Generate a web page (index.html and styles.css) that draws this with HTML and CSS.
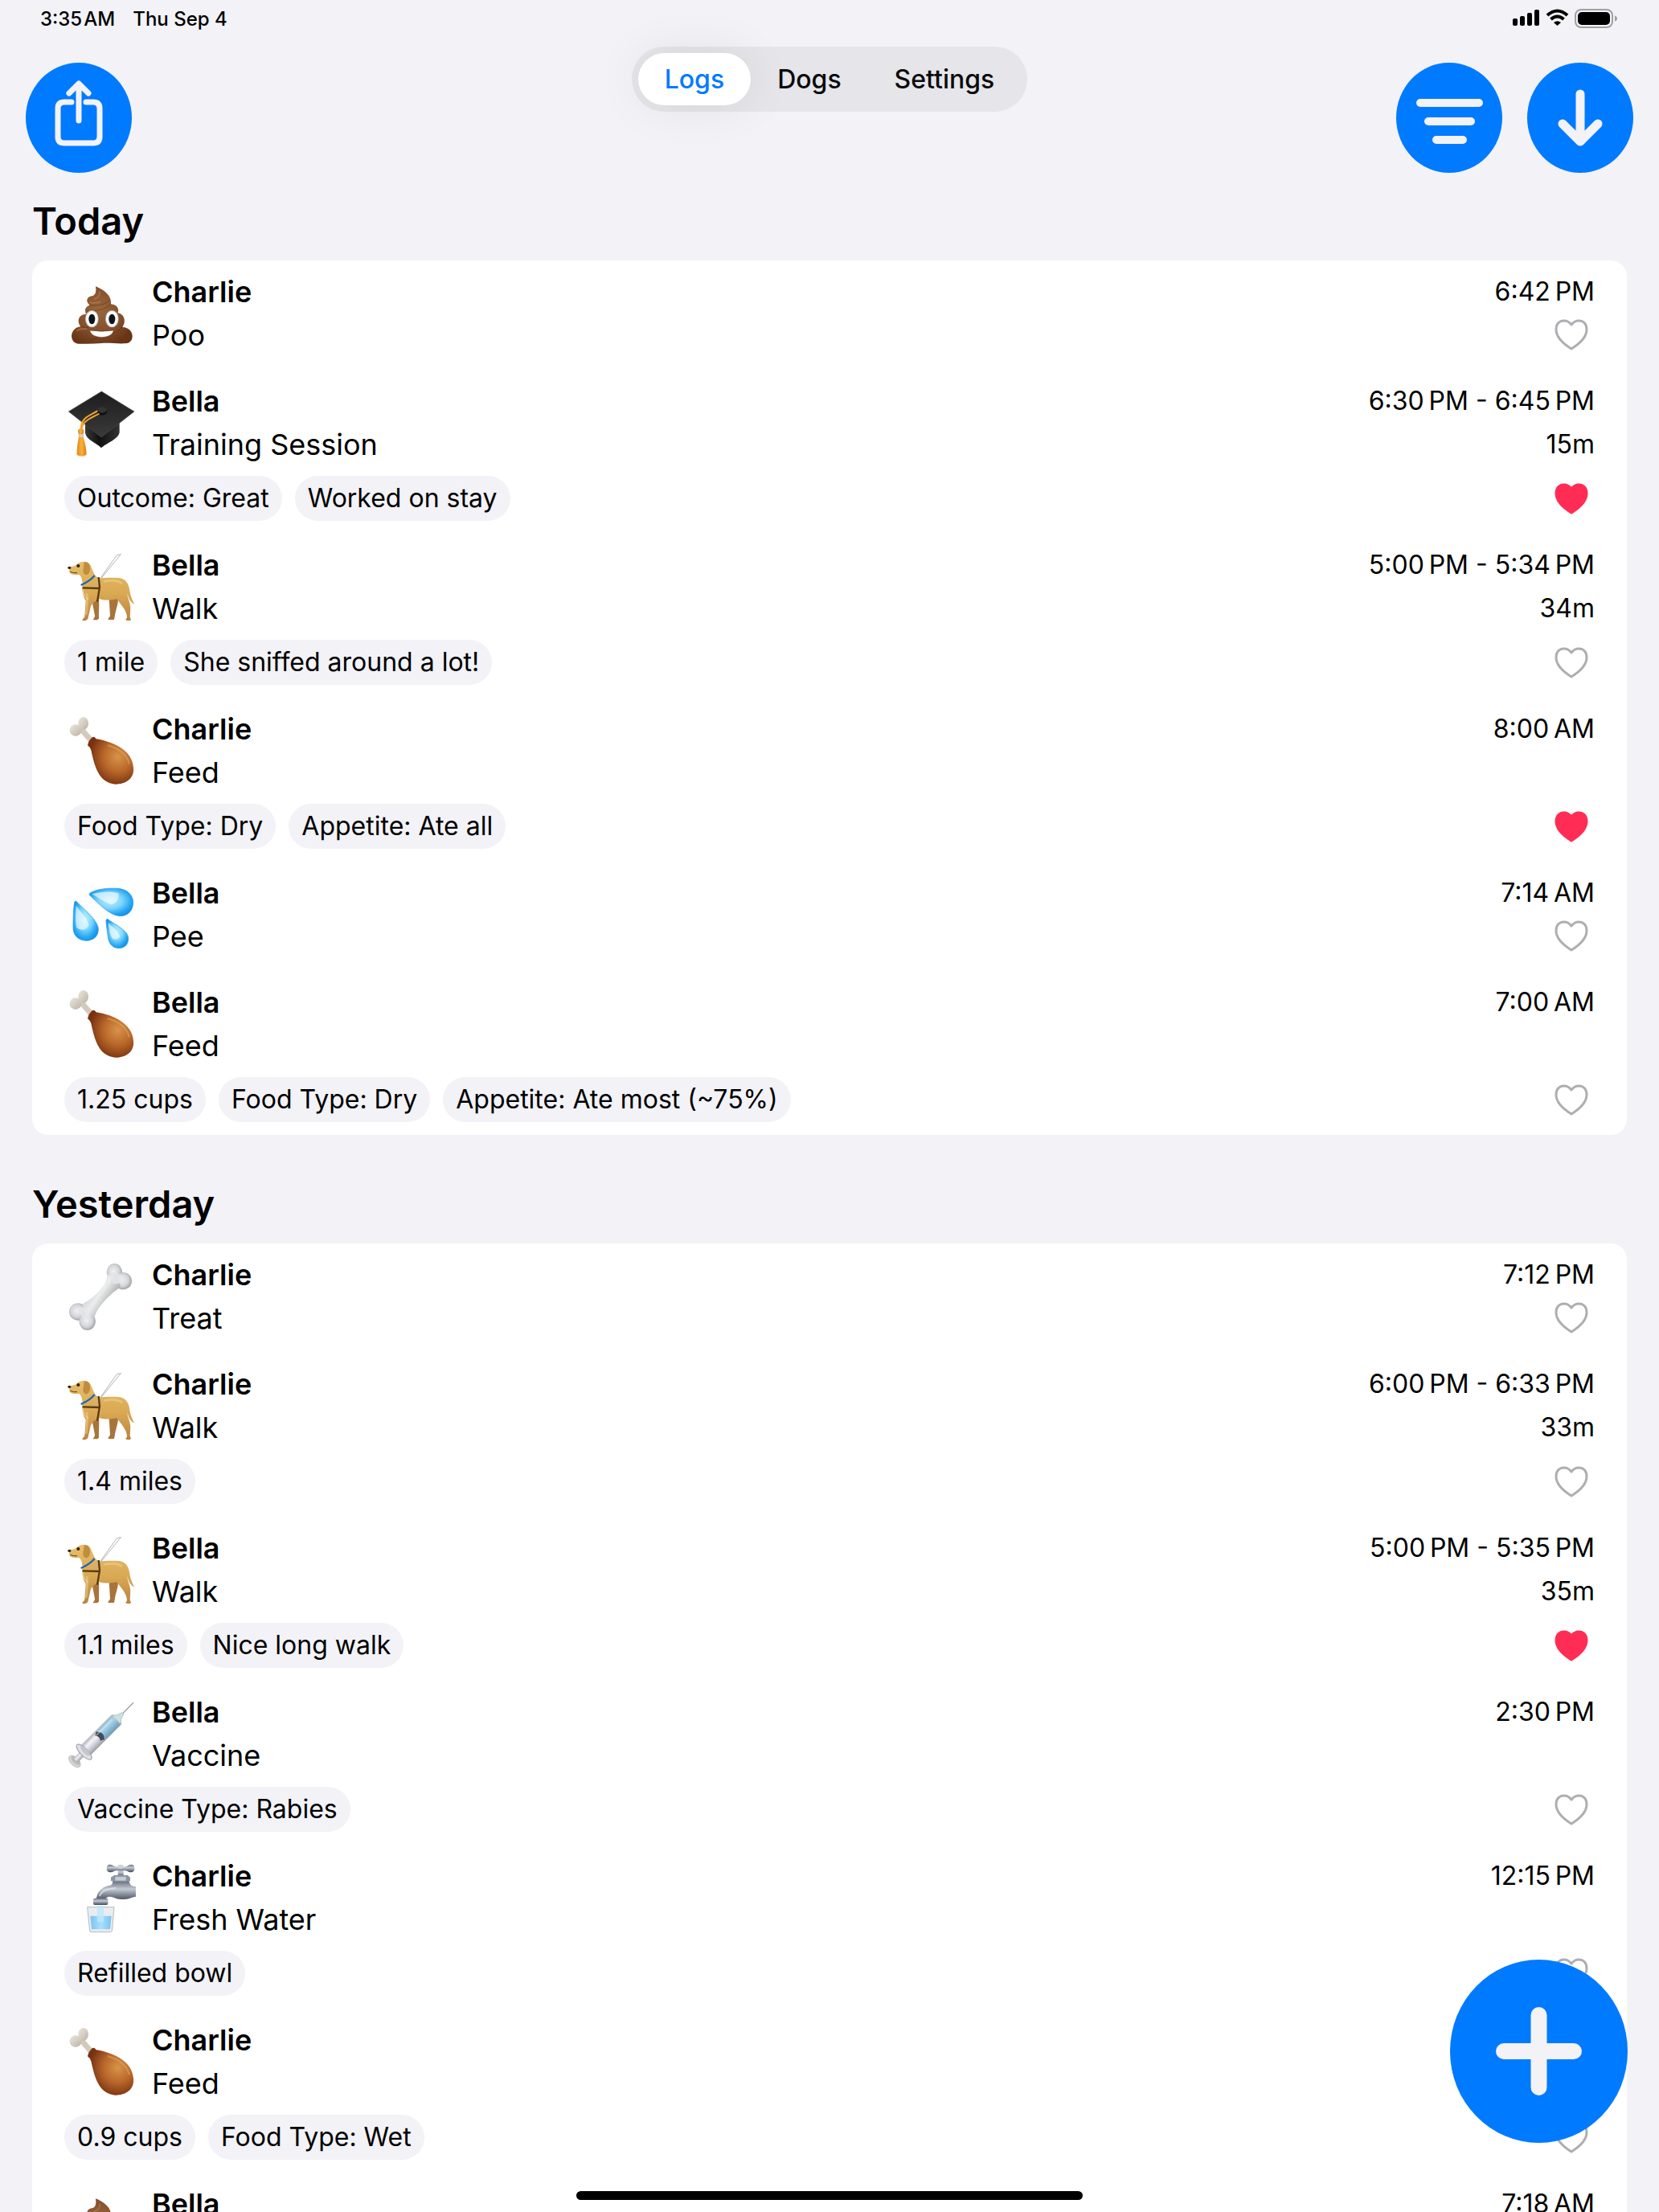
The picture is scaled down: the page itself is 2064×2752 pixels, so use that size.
FILE: index.html
```html
<!DOCTYPE html>
<html lang="en">
<head>
<meta charset="utf-8">
<meta name="viewport" content="width=device-width, initial-scale=1">
<title>Dog Logs</title>
<link rel="stylesheet" href="styles.css">
</head>
<body>
<svg class="sprite" aria-hidden="true">
  <defs>
    <radialGradient id="g-poo" cx=".45" cy=".4" r=".65"><stop offset="0" stop-color="#99663c"/><stop offset=".6" stop-color="#83502c"/><stop offset="1" stop-color="#673416"/></radialGradient>
    <linearGradient id="g-board" x1="0" y1="0" x2="0" y2="1"><stop offset="0" stop-color="#1d1d1d"/><stop offset="1" stop-color="#3a3a3a"/></linearGradient>
    <linearGradient id="g-cap" x1="0" y1="0" x2="1" y2="0"><stop offset="0" stop-color="#3b3b3b"/><stop offset=".4" stop-color="#111"/><stop offset="1" stop-color="#333"/></linearGradient>
    <linearGradient id="g-tassel" x1="0" y1="0" x2="1" y2="0"><stop offset="0" stop-color="#e0881a"/><stop offset=".5" stop-color="#fbb03a"/><stop offset="1" stop-color="#d98015"/></linearGradient>
    <linearGradient id="g-dog" x1="0" y1="0" x2="0" y2="1"><stop offset="0" stop-color="#e6bd6a"/><stop offset=".55" stop-color="#d9a853"/><stop offset="1" stop-color="#b9823f"/></linearGradient>
    <radialGradient id="g-meat" cx=".66" cy=".42" r=".62"><stop offset="0" stop-color="#d8934a"/><stop offset=".5" stop-color="#b9682a"/><stop offset="1" stop-color="#793210"/></radialGradient>
    <linearGradient id="g-knuckle" x1="0" y1="0" x2="1" y2="1"><stop offset="0" stop-color="#ece7df"/><stop offset="1" stop-color="#bdb3a5"/></linearGradient>
    <radialGradient id="g-drop" cx=".48" cy=".45" r=".6"><stop offset="0" stop-color="#b9f0ff"/><stop offset=".45" stop-color="#7fd6fb"/><stop offset=".8" stop-color="#24a6f2"/><stop offset="1" stop-color="#1590e2"/></radialGradient>
    <radialGradient id="g-lobe" cx=".45" cy=".45" r=".6"><stop offset="0" stop-color="#f2f2f5"/><stop offset=".6" stop-color="#d4d5d8"/><stop offset="1" stop-color="#97989c"/></radialGradient>
    <linearGradient id="g-shaft" x1="0" y1="0" x2="1" y2=".8"><stop offset=".2" stop-color="#c6c7ca"/><stop offset=".5" stop-color="#eceeee"/><stop offset=".8" stop-color="#a3a4a7"/></linearGradient>
    <linearGradient id="g-barrel" x1="0" y1="0" x2="0" y2="1"><stop offset="0" stop-color="#b5b7bf"/><stop offset=".35" stop-color="#f2f2f6"/><stop offset=".7" stop-color="#c7c7d0"/><stop offset="1" stop-color="#9c9da6"/></linearGradient>
    <linearGradient id="g-serum" x1="0" y1="0" x2="0" y2="1"><stop offset="0" stop-color="#9fc0d2"/><stop offset=".35" stop-color="#a6d3ea"/><stop offset="1" stop-color="#6c9fbb"/></linearGradient>
    <linearGradient id="g-metal" x1="0" y1="0" x2="0" y2="1"><stop offset="0" stop-color="#66707f"/><stop offset=".4" stop-color="#c5cad3"/><stop offset=".7" stop-color="#7f8795"/><stop offset="1" stop-color="#434650"/></linearGradient>
    <linearGradient id="g-water" x1="0" y1="0" x2="1" y2="0"><stop offset="0" stop-color="#7cc1f3"/><stop offset=".5" stop-color="#a9e0fd"/><stop offset="1" stop-color="#7cc1f3"/></linearGradient>
  </defs>

  <symbol id="e-poo" viewBox="0 -6 288 288">
    <path fill="url(#g-poo)" d="M117 37C148 49 178 72 174 103C196 106 206 118 200 136C228 142 230 172 217 189C262 190 267 249 228 250C200 252 170 247 140 249C110 252 80 251 52 251C18 248 18 192 61 187C46 168 52 141 81 140C74 122 80 111 96 107C76 92 86 73 107 72C119 66 119 52 117 37Z"/>
    <path fill="none" stroke="#5f3013" stroke-opacity=".55" stroke-width="3" d="M174 103C160 122 110 132 84 128M92 105C110 112 150 108 168 90M216 189C190 222 130 216 98 240M62 187C75 191 86 191 96 188"/>
    <path fill="none" stroke="#b98357" stroke-opacity=".6" stroke-width="5" stroke-linecap="round" d="M112 84C125 80 134 70 132 58M96 96C102 100 120 100 134 94M48 202C56 196 70 195 82 196"/>
    <ellipse cx="103" cy="158" rx="25" ry="32" fill="#c3beb9"/><ellipse cx="178" cy="158" rx="25" ry="32" fill="#c3beb9"/>
    <ellipse cx="103" cy="158" rx="22" ry="29" fill="#fff"/><ellipse cx="178" cy="158" rx="22" ry="29" fill="#fff"/>
    <ellipse cx="103" cy="159" rx="12" ry="19" fill="#101416"/><ellipse cx="178" cy="159" rx="12" ry="19" fill="#101416"/>
    <path fill="#fff" stroke="#6b3b1d" stroke-width="2" d="M95 201Q140 208 184 201C180 235 100 236 95 201Z"/>
  </symbol>

  <symbol id="e-cap" viewBox="0 -6 288 288">
    <path fill="url(#g-cap)" d="M78 140V176C84 204 120 212 138 232C156 214 202 200 206 174V138Z"/>
    <path fill="url(#g-board)" stroke="#4a4a4a" stroke-width="2" stroke-linejoin="round" d="M139 21L261 96L138 192L16 96Z"/>
    <ellipse cx="141" cy="96" rx="19" ry="14" fill="#111"/><ellipse cx="141" cy="90" rx="17" ry="11" fill="#343434"/>
    <path fill="none" stroke="#f5a52c" stroke-width="6" stroke-linecap="round" d="M122 95C92 112 64 118 62 160M128 105C98 122 70 130 65 160"/>
    <circle cx="62" cy="171" r="11" fill="url(#g-tassel)"/>
    <rect x="54" y="179" width="16" height="14" fill="#d8d0b4" stroke="#8d7d4f"/>
    <path fill="url(#g-tassel)" d="M54 192H71C77 212 84 240 82 258Q64 269 47 258C46 236 50 210 54 192Z"/>
  </symbol>

  <symbol id="e-dog" viewBox="0 -6 288 288">
    <path fill="#a8743a" d="M105 165L128 170C132 200 128 230 129 257L123 262H107C108 256 115 252 114 246L106 205ZM166 165L200 175C204 200 192 220 188 250L186 261H163C164 254 170 252 171 247Z"/>
    <path fill="url(#g-dog)" d="M50 52C60 42 90 40 98 58C108 80 112 98 128 106C150 104 180 103 203 105C228 108 239 124 243 146C246 170 252 186 262 202C248 198 240 182 235 162C235 178 246 196 247 216L245 250L249 262Q240 268 229 262C230 257 235 255 234 250C232 226 212 206 196 184C176 188 150 190 132 184C118 190 104 198 98 214C94 232 91 244 88 258Q78 269 67 263C68 257 75 254 76 250L80 190C70 176 64 150 68 125C66 112 66 104 56 93C44 94 28 94 20 86L17 66C28 62 42 62 50 52Z"/>
    <path fill="none" stroke="#f3d68f" stroke-width="8" stroke-linecap="round" stroke-opacity=".5" d="M150 118C175 113 198 114 214 124M84 165C88 190 84 215 82 240"/>
    <path fill="#c08c3e" d="M74 46C88 44 96 54 96 68C97 80 92 92 82 94C70 92 68 78 72 66Z"/>
    <ellipse cx="19" cy="67" rx="6" ry="5" fill="#222"/><circle cx="52" cy="60" r="6" fill="#2b211b"/>
    <path fill="none" stroke="#593d24" stroke-width="3" d="M22 82Q34 88 48 86"/>
    <path fill="none" stroke="#2067b4" stroke-width="7" d="M62 132C80 124 100 112 113 96"/>
    <path fill="none" stroke="#b4b4b4" stroke-width="3" d="M108 144L196 20L211 17L130 116"/>
    <path fill="none" stroke="#5b3b0d" stroke-width="7" stroke-linejoin="round" d="M68 142L134 144M128 102L132 140L123 194"/>
    <path fill="none" stroke="#efe5d0" stroke-width="3" d="M69 148C70 168 78 180 90 184"/>
  </symbol>

  <symbol id="e-feed" viewBox="0 -6 288 288">
    <path stroke="#d3cabd" stroke-width="21" d="M62 56L100 100"/>
    <ellipse cx="42" cy="62" rx="22" ry="22" fill="url(#g-knuckle)"/><ellipse cx="71" cy="36" rx="19" ry="24" fill="url(#g-knuckle)"/>
    <path fill="url(#g-meat)" d="M105 87Q114 84 119 94C170 102 254 130 258 202C262 244 226 264 190 263C126 258 112 190 100 136Q96 124 87 118Q90 100 105 87Z"/>
    <path fill="none" stroke="#e7ad69" stroke-width="7" stroke-linecap="round" stroke-opacity=".45" d="M164 118C200 128 232 150 242 184"/>
  </symbol>

  <symbol id="e-drops" viewBox="0 -6 288 288">
    <g fill="url(#g-drop)" stroke="#1a95e6" stroke-width="2">
      <path d="M95 58C120 40 170 38 200 40C238 43 257 68 257 92C257 125 235 143 208 143C165 140 128 94 95 66Q92 62 95 58Z"/>
      <path d="M46 89C66 112 127 158 127 192C127 222 105 235 80 235C48 232 32 212 33 182C33 150 35 110 38 91Q42 84 46 89Z"/>
      <path d="M164 156C184 172 239 196 239 226C239 250 225 263 203 263C175 262 166 242 163 220C160 195 156 175 156 158Q160 150 164 156Z"/>
    </g>
    <g fill="#fff" fill-opacity=".6">
      <path d="M104 61C140 50 178 50 202 58C206 78 196 96 176 100C150 92 128 76 104 61Z"/>
      <path d="M44 104C62 128 84 150 92 176C82 196 62 200 46 186C40 160 42 130 44 104Z"/>
      <path d="M164 168C180 184 200 200 208 218C202 230 190 234 178 226C170 208 166 188 164 168Z"/>
    </g>
  </symbol>

  <symbol id="e-bone" viewBox="0 -6 288 288">
    <ellipse cx="187" cy="48" rx="29" ry="33" fill="url(#g-lobe)"/><ellipse cx="219" cy="80" rx="33" ry="32" fill="url(#g-lobe)"/>
    <ellipse cx="51" cy="195" rx="33" ry="32" fill="url(#g-lobe)"/><ellipse cx="86" cy="230" rx="31" ry="34" fill="url(#g-lobe)"/>
    <path fill="url(#g-shaft)" d="M160 56C162 96 112 140 72 163C62 186 82 222 112 218C120 180 170 130 206 106C218 92 190 56 160 56Z"/>
    <path fill="#e4e6e8" fill-opacity=".8" d="M176 50C200 44 224 62 222 82C210 92 192 92 182 90C174 78 170 60 176 50ZM50 182C70 170 96 190 98 216C88 230 74 226 62 208Z"/>
  </symbol>

  <symbol id="e-syringe" viewBox="0 -6 288 288">
    <g transform="translate(40 240) rotate(-45)">
      <path stroke="#7e8892" stroke-width="3" d="M248 0H309"/>
      <ellipse cx="-2" cy="0" rx="15" ry="27" fill="#d5d5d3" stroke="#aaa" stroke-width="2"/><ellipse cx="4" cy="0" rx="11" ry="21" fill="#bcbcbb"/>
      <rect x="4" y="-11" width="46" height="22" fill="url(#g-barrel)"/>
      <rect x="50" y="-25" width="172" height="50" rx="6" fill="url(#g-barrel)" stroke="#a7abb3" stroke-width="2"/>
      <path fill="url(#g-serum)" d="M142 -23H214Q222 0 214 23H142Z"/>
      <path fill="#414b59" d="M134 -22Q156 0 134 22Q126 12 120 14Q132 0 120 -14Q126 -18 134 -22Z"/>
      <ellipse cx="48" cy="0" rx="14" ry="38" fill="#dfe0e5" stroke="#9a9ca4" stroke-width="3"/><ellipse cx="54" cy="0" rx="9" ry="24" fill="#c5c6cd"/>
      <path fill="#cfe0e2" stroke="#9db0b6" stroke-width="2" d="M218 -20Q226 -20 230 -12L252 -4V4L230 12Q226 20 218 20Z"/>
      <path stroke="#fff" stroke-opacity=".4" stroke-width="5" d="M70 -12H208"/>
    </g>
  </symbol>

  <symbol id="e-tap" viewBox="0 -6 288 288">
    <rect x="200" y="28" width="21" height="34" fill="url(#g-metal)"/>
    <path fill="url(#g-metal)" d="M158 28C158 10 176 12 186 20Q210 28 234 20C246 12 262 10 262 28C262 46 246 46 234 38Q210 32 186 38C176 46 158 46 158 28Z"/>
    <ellipse cx="210" cy="22" rx="12" ry="8" fill="#cfd4dc"/>
    <path fill="#8e96a3" d="M186 54H236L246 62V76H174V62Z"/><path fill="#c7ccd3" d="M190 60H230V74H190Z"/>
    <path fill="url(#g-metal)" d="M180 76H242C244 92 254 96 267 97V134C250 136 244 144 214 144C190 145 180 130 162 136Q152 139 152 150H119C119 112 146 94 172 92Q182 88 180 76Z"/>
    <path fill="none" stroke="#e6e9ee" stroke-opacity=".7" stroke-width="6" stroke-linecap="round" d="M132 130C142 108 166 106 190 102"/>
    <rect x="108" y="140" width="55" height="25" rx="6" fill="url(#g-metal)"/>
    <path fill="#e9edef" stroke="#b3babd" stroke-width="3" d="M86 173H186L178 262Q177 266 172 266H102Q96 266 95 262Z"/>
    <path fill="url(#g-water)" d="M97 206H176L171 256H102Z"/>
    <rect x="123" y="168" width="24" height="60" fill="#bfe6fa" fill-opacity=".8"/>
  </symbol>

  <symbol id="i-heart" viewBox="0 0 42 39">
    <path d="M21 7C18 3 15 2 12 2C6 2 2 6 2 13C2 24 13 32 21 37C29 32 40 24 40 13C40 6 36 2 30 2C27 2 24 3 21 7Z"/>
  </symbol>
</svg>

<div class="status">
  <div class="status-group"><span>3:35&#8202;AM</span><span>Thu Sep 4</span></div>
  <svg class="status-icons" viewBox="0 0 132 26" aria-label="Signal, Wi-Fi and battery full">
    <rect x="0" y="12" width="6" height="9" rx="2"/><rect x="9" y="9" width="6" height="12" rx="2"/><rect x="18" y="5" width="6" height="16" rx="2"/><rect x="27" y="1" width="6" height="20" rx="2"/>
    <path fill="none" stroke="#000" stroke-width="4" d="M43 8Q55.500 -3 68 8M47.500 13Q55.500 6 63.500 13"/>
    <path d="M55.500 21L51 17Q55.500 13.500 60 17Z"/>
    <rect x="78" y="1" width="46" height="22" rx="7" fill="none" stroke="#a0a0a5" stroke-width="2"/>
    <rect x="81" y="4" width="40" height="16" rx="5"/><path fill="#a0a0a5" d="M127 8.500Q130 9.500 130 12Q130 14.500 127 15.500Z"/>
  </svg>
</div>

<header class="toolbar">
  <div class="actions">
    <button class="round" type="button" aria-label="Share">
      <svg viewBox="0 0 132 137"><path d="M57 49H48Q40 49 40 57V92Q40 100 48 100H84Q92 100 92 92V57Q92 49 84 49H75M66 27V72M54 38L66 26L78 38"/></svg>
    </button>
  </div>
  <nav class="tabs">
    <a class="tab tab-on" href="#logs" aria-current="page">Logs</a>
    <a class="tab" href="#dogs">Dogs</a>
    <a class="tab" href="#settings">Settings</a>
  </nav>
  <div class="actions actions-end">
    <button class="round" type="button" aria-label="Filter">
      <svg viewBox="0 0 132 137"><path class="bar" d="M30 50H103M40 73H93M50 96H83"/></svg>
    </button>
    <button class="round" type="button" aria-label="Jump to latest">
      <svg viewBox="0 0 132 137"><path class="arrow" d="M66 39V98M44 76L66 98L88 76"/></svg>
    </button>
  </div>
</header>

<main class="logs" id="logs">
  <section>
    <h2 class="day">Today</h2>
    <ul class="card">
      <li class="log">
        <svg class="emoji"><use href="#e-poo"/></svg>
        <div class="what"><strong>Charlie</strong><span>Poo</span></div>
        <div class="when"><time>6:42&#8201;PM</time><button class="heart" type="button" aria-label="Like"><svg><use href="#i-heart"/></svg></button></div>
      </li>
      <li class="log">
        <svg class="emoji"><use href="#e-cap"/></svg>
        <div class="what"><strong>Bella</strong><span>Training Session</span></div>
        <div class="when"><time>6:30&#8201;PM - 6:45&#8201;PM</time><span>15m</span></div>
        <div class="notes"><span class="chip">Outcome: Great</span><span class="chip">Worked on stay</span><button class="heart liked" type="button" aria-label="Unlike"><svg><use href="#i-heart"/></svg></button></div>
      </li>
      <li class="log">
        <svg class="emoji"><use href="#e-dog"/></svg>
        <div class="what"><strong>Bella</strong><span>Walk</span></div>
        <div class="when"><time>5:00&#8201;PM - 5:34&#8201;PM</time><span>34m</span></div>
        <div class="notes"><span class="chip">1 mile</span><span class="chip">She sniffed around a lot!</span><button class="heart" type="button" aria-label="Like"><svg><use href="#i-heart"/></svg></button></div>
      </li>
      <li class="log">
        <svg class="emoji"><use href="#e-feed"/></svg>
        <div class="what"><strong>Charlie</strong><span>Feed</span></div>
        <div class="when"><time>8:00&#8201;AM</time></div>
        <div class="notes"><span class="chip">Food Type: Dry</span><span class="chip">Appetite: Ate all</span><button class="heart liked" type="button" aria-label="Unlike"><svg><use href="#i-heart"/></svg></button></div>
      </li>
      <li class="log">
        <svg class="emoji"><use href="#e-drops"/></svg>
        <div class="what"><strong>Bella</strong><span>Pee</span></div>
        <div class="when"><time>7:14&#8201;AM</time><button class="heart" type="button" aria-label="Like"><svg><use href="#i-heart"/></svg></button></div>
      </li>
      <li class="log">
        <svg class="emoji"><use href="#e-feed"/></svg>
        <div class="what"><strong>Bella</strong><span>Feed</span></div>
        <div class="when"><time>7:00&#8201;AM</time></div>
        <div class="notes"><span class="chip">1.25 cups</span><span class="chip">Food Type: Dry</span><span class="chip">Appetite: Ate most (~75%)</span><button class="heart" type="button" aria-label="Like"><svg><use href="#i-heart"/></svg></button></div>
      </li>
    </ul>
  </section>

  <section>
    <h2 class="day">Yesterday</h2>
    <ul class="card">
      <li class="log">
        <svg class="emoji"><use href="#e-bone"/></svg>
        <div class="what"><strong>Charlie</strong><span>Treat</span></div>
        <div class="when"><time>7:12&#8201;PM</time><button class="heart" type="button" aria-label="Like"><svg><use href="#i-heart"/></svg></button></div>
      </li>
      <li class="log">
        <svg class="emoji"><use href="#e-dog"/></svg>
        <div class="what"><strong>Charlie</strong><span>Walk</span></div>
        <div class="when"><time>6:00&#8201;PM - 6:33&#8201;PM</time><span>33m</span></div>
        <div class="notes"><span class="chip">1.4 miles</span><button class="heart" type="button" aria-label="Like"><svg><use href="#i-heart"/></svg></button></div>
      </li>
      <li class="log">
        <svg class="emoji"><use href="#e-dog"/></svg>
        <div class="what"><strong>Bella</strong><span>Walk</span></div>
        <div class="when"><time>5:00&#8201;PM - 5:35&#8201;PM</time><span>35m</span></div>
        <div class="notes"><span class="chip">1.1 miles</span><span class="chip">Nice long walk</span><button class="heart liked" type="button" aria-label="Unlike"><svg><use href="#i-heart"/></svg></button></div>
      </li>
      <li class="log">
        <svg class="emoji"><use href="#e-syringe"/></svg>
        <div class="what"><strong>Bella</strong><span>Vaccine</span></div>
        <div class="when"><time>2:30&#8201;PM</time></div>
        <div class="notes"><span class="chip">Vaccine Type: Rabies</span><button class="heart" type="button" aria-label="Like"><svg><use href="#i-heart"/></svg></button></div>
      </li>
      <li class="log">
        <svg class="emoji"><use href="#e-tap"/></svg>
        <div class="what"><strong>Charlie</strong><span>Fresh Water</span></div>
        <div class="when"><time>12:15&#8201;PM</time></div>
        <div class="notes"><span class="chip">Refilled bowl</span><button class="heart" type="button" aria-label="Like"><svg><use href="#i-heart"/></svg></button></div>
      </li>
      <li class="log">
        <svg class="emoji"><use href="#e-feed"/></svg>
        <div class="what"><strong>Charlie</strong><span>Feed</span></div>
        <div class="when"></div>
        <div class="notes"><span class="chip">0.9 cups</span><span class="chip">Food Type: Wet</span><button class="heart" type="button" aria-label="Like"><svg><use href="#i-heart"/></svg></button></div>
      </li>
      <li class="log">
        <svg class="emoji"><use href="#e-poo"/></svg>
        <div class="what"><strong>Bella</strong></div>
        <div class="when"><time>7:18&#8201;AM</time></div>
      </li>
    </ul>
  </section>
</main>

<button class="add" type="button" aria-label="Add log">
  <svg viewBox="0 0 221 228"><path d="M67 114H154M110.500 69V159"/></svg>
</button>
<div class="home-bar"></div>
</body>
</html>
```
FILE: styles.css
```css
:root {
  --blue: #007aff;
  --page: #f2f2f7;
  --heart: #aeaeb2;
  --liked: #ff2d55;
}

* {
  box-sizing: border-box;
}

body {
  margin: 0;
  height: 100vh;
  display: flex;
  flex-direction: column;
  overflow: hidden;
  background: var(--page);
  color: #000;
  font-family: Inter, "Liberation Sans", sans-serif;
  font-size: 32px;
  line-height: 54px;
}

button {
  padding: 0;
  border: 0;
  background: none;
  font: inherit;
  cursor: pointer;
}

button svg {
  display: block;
  width: 100%;
  height: 100%;
}

.sprite {
  position: absolute;
  width: 0;
  height: 0;
}

/* Status bar */

.status {
  flex: none;
  display: flex;
  justify-content: space-between;
  align-items: center;
  height: 48px;
  padding: 0 50px;
  font-size: 24px;
  line-height: 28px;
  font-weight: 500;
}

.status-group {
  display: flex;
  gap: 22px;
}

.status-icons {
  width: 132px;
  height: 26px;
}

/* Toolbar */

.toolbar {
  flex: none;
  display: grid;
  grid-template-columns: 1fr auto 1fr;
  align-items: start;
  padding: 10px 32px 30px;
}

.actions {
  display: flex;
  gap: 31px;
  padding-top: 20px;
}

.actions-end {
  justify-content: flex-end;
}

.round {
  width: 132px;
  height: 137px;
  border-radius: 50%;
  background: var(--blue);
}

.round path {
  fill: none;
  stroke: var(--page);
  stroke-width: 7;
  stroke-linecap: round;
  stroke-linejoin: round;
}

.round .bar {
  stroke-width: 10;
}

.round .arrow {
  stroke-width: 11;
}

.tabs {
  display: flex;
  padding: 8px;
  border-radius: 41px;
  background: #e5e5ea;
}

.tab {
  padding: 0 33px;
  border-radius: 33px;
  color: #0b0b0b;
  line-height: 65px;
  font-weight: 500;
  text-decoration: none;
}

.tab-on {
  background: #fff;
  color: var(--blue);
  box-shadow: 0 0 60px rgba(0, 0, 0, 0.08);
}

/* Log list */

.logs {
  flex: 1;
  min-height: 0;
  overflow: hidden;
  padding: 0 40px;
}

.day {
  margin: 0 0 19px;
  font-size: 47px;
  line-height: 60px;
  font-weight: 600;
}

.card {
  margin: 0 0 56px;
  padding: 0;
  list-style: none;
  border-radius: 20px;
  background: #fff;
}

.log {
  display: grid;
  grid-template-columns: 96px 1fr auto;
  column-gap: 13px;
  row-gap: 12px;
  padding: 12px 40px 16px;
}

.emoji {
  align-self: center;
  width: 96px;
  height: 96px;
}

.what,
.when {
  display: flex;
  flex-direction: column;
  min-height: 108px;
}

.what {
  font-size: 36px;
}

.what strong {
  font-weight: 600;
}

.when {
  align-items: flex-end;
}

.heart {
  width: 42px;
  height: 39px;
  margin: 7px 8px;
  fill: none;
  stroke: var(--heart);
  stroke-width: 3;
  stroke-linejoin: round;
}

.liked {
  fill: var(--liked);
  stroke: var(--liked);
}

.notes {
  grid-column: 1 / -1;
  display: flex;
  align-items: center;
  gap: 16px;
}

.notes .heart {
  margin: 0 8px 0 auto;
}

.chip {
  padding: 0 16px;
  border-radius: 28px;
  background: var(--page);
  line-height: 56px;
}

/* Floating controls */

.add {
  position: fixed;
  right: 39px;
  bottom: 86px;
  width: 221px;
  height: 228px;
  border-radius: 50%;
  background: var(--blue);
}

.add path {
  fill: none;
  stroke: var(--page);
  stroke-width: 20;
  stroke-linecap: round;
}

.home-bar {
  position: fixed;
  bottom: 15px;
  left: 50%;
  width: 630px;
  height: 11px;
  margin-left: -315px;
  border-radius: 6px;
  background: #000;
}
```
